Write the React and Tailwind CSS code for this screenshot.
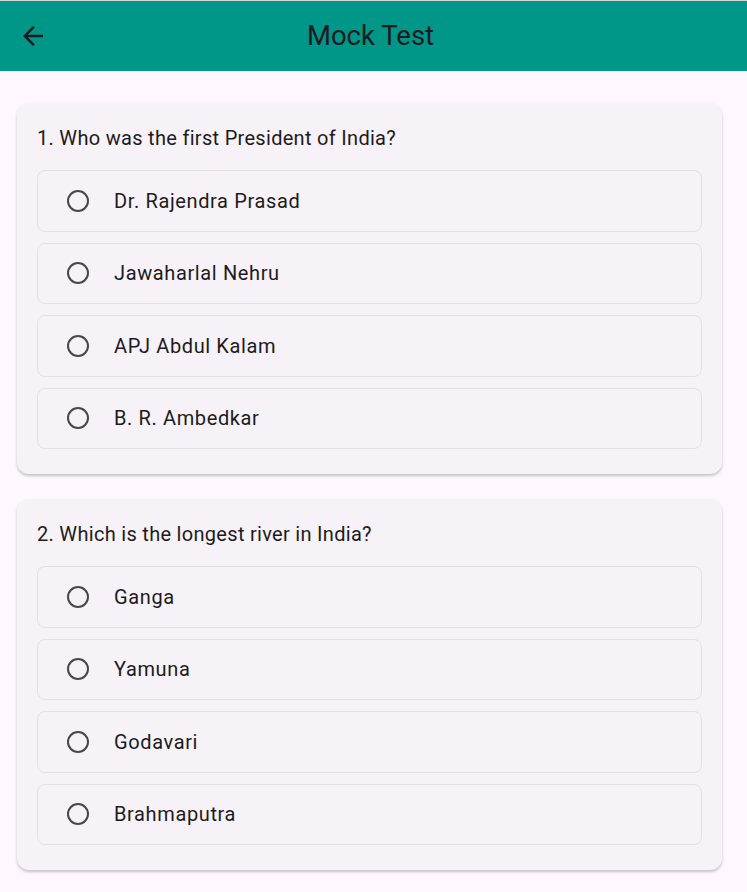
import React, { useState } from "react";

const questions = [
  {
    q: "1. Who was the first President of India?",
    options: ["Dr. Rajendra Prasad", "Jawaharlal Nehru", "APJ Abdul Kalam", "B. R. Ambedkar"],
  },
  {
    q: "2. Which is the longest river in India?",
    options: ["Ganga", "Yamuna", "Godavari", "Brahmaputra"],
  },
];

const App = () => {
  const [answers, setAnswers] = useState({});

  return (
    <div className="min-h-screen bg-[#fef7ff] font-['Roboto',sans-serif] text-[#1d1b20]">
      {/* APP BAR */}
      <div className="border-t border-[#d6d6d6] bg-[#009688] h-[71px] flex items-center relative">
        <button className="ml-[18px] w-[30px] h-[30px] flex items-center justify-center">
          <svg width="30" height="30" viewBox="0 0 24 24" fill="#1d1b20">
            <path d="M20 11H7.83l5.59-5.59L12 4l-8 8 8 8 1.41-1.41L7.83 13H20v-2z" />
          </svg>
        </button>
        <h1 className="absolute left-0 right-[6px] text-center text-[27.5px] pointer-events-none">Mock Test</h1>
      </div>

      <div className="pl-[17px] pr-[25px] pt-[32px] pb-[20px] flex flex-col gap-[25px]">
        {questions.map((item, qi) => (
          <div
            key={qi}
            className="bg-[#f6f2f7] rounded-[12px] shadow-[0_2px_3px_rgba(0,0,0,0.22)] px-[20px] pt-[22px] pb-[25px]"
          >
            <p className="text-[20px] tracking-[0.3px] leading-[26px] mb-[19px]">{item.q}</p>
            <div className="flex flex-col gap-[11px]">
              {item.options.map((opt, oi) => (
                <div
                  key={oi}
                  onClick={() => setAnswers({ ...answers, [qi]: oi })}
                  className="h-[61.5px] border border-[#e2dfe5] rounded-[8px] flex items-center pl-[29px] cursor-pointer"
                >
                  <span className="w-[22px] h-[22px] rounded-full border-[2.5px] border-[#49454f] flex items-center justify-center shrink-0">
                    {answers[qi] === oi && <span className="w-[10px] h-[10px] rounded-full bg-[#49454f]" />}
                  </span>
                  <span className="ml-[25px] text-[20px] tracking-[0.625px]">{opt}</span>
                </div>
              ))}
            </div>
          </div>
        ))}
      </div>
    </div>
  );
};

export default App;
